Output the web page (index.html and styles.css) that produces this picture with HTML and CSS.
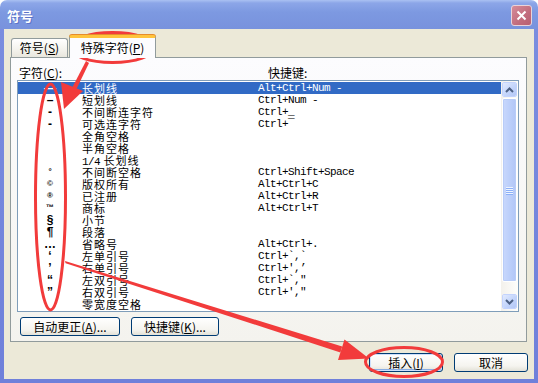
FILE: index.html
```html
<!DOCTYPE html>
<html lang="zh-CN">
<head>
    <meta charset="UTF-8">
    <title>符号</title>
    <link rel="stylesheet" href="styles.css">
</head>
<body>
    <div class="window">
        <!-- Title bar -->
        <div class="titlebar">
            <span class="title">符号</span>
            <span class="close-btn">
                <svg width="11" height="11" viewBox="0 0 11 11"><path d="M1.5 1.5 L9.5 9.5 M9.5 1.5 L1.5 9.5" stroke="#fff" stroke-width="2" fill="none"/></svg>
            </span>
        </div>

        <div class="client">
            <!-- Tabs -->
            <div class="tabs">
                <div class="tab">符号(<u>S</u>)</div>
                <div class="tab active">特殊字符(<u>P</u>)</div>
            </div>

            <div class="panel">
                <div class="labels">
                    <span class="label-char">字符(<u>C</u>):</span>
                    <span>快捷键:</span>
                </div>

                <div class="listbox">
                    <div class="rows">
                        <div class="row selected"><span class="sym">—</span><span class="name">长划线</span><span class="key">Alt+Ctrl+Num -</span></div>
                        <div class="row"><span class="sym">–</span><span class="name">短划线</span><span class="key">Ctrl+Num -</span></div>
                        <div class="row"><span class="sym">-</span><span class="name">不间断连字符</span><span class="key">Ctrl+_</span></div>
                        <div class="row"><span class="sym">-</span><span class="name">可选连字符</span><span class="key">Ctrl+¯</span></div>
                        <div class="row"><span class="sym"></span><span class="name">全角空格</span><span class="key"></span></div>
                        <div class="row"><span class="sym"></span><span class="name">半角空格</span><span class="key"></span></div>
                        <div class="row"><span class="sym"></span><span class="name"><span class="mono">1/4</span> 长划线</span><span class="key"></span></div>
                        <div class="row"><span class="sym small">°</span><span class="name">不间断空格</span><span class="key">Ctrl+Shift+Space</span></div>
                        <div class="row"><span class="sym small">©</span><span class="name">版权所有</span><span class="key">Alt+Ctrl+C</span></div>
                        <div class="row"><span class="sym small">®</span><span class="name">已注册</span><span class="key">Alt+Ctrl+R</span></div>
                        <div class="row"><span class="sym small">™</span><span class="name">商标</span><span class="key">Alt+Ctrl+T</span></div>
                        <div class="row"><span class="sym">§</span><span class="name">小节</span><span class="key"></span></div>
                        <div class="row"><span class="sym">¶</span><span class="name">段落</span><span class="key"></span></div>
                        <div class="row"><span class="sym">…</span><span class="name">省略号</span><span class="key">Alt+Ctrl+.</span></div>
                        <div class="row"><span class="sym">‘</span><span class="name">左单引号</span><span class="key">Ctrl+`,`</span></div>
                        <div class="row"><span class="sym">’</span><span class="name">右单引号</span><span class="key">Ctrl+',’</span></div>
                        <div class="row"><span class="sym">“</span><span class="name">左双引号</span><span class="key">Ctrl+`,"</span></div>
                        <div class="row"><span class="sym">”</span><span class="name">右双引号</span><span class="key">Ctrl+',"</span></div>
                        <div class="row"><span class="sym"></span><span class="name">零宽度空格</span><span class="key"></span></div>
                    </div>

                    <!-- Vertical scrollbar -->
                    <div class="scrollbar">
                        <div class="scroll-btn">
                            <svg width="9" height="6" viewBox="0 0 9 6"><path d="M1 5 L4.5 1.5 L8 5" stroke="#4D6185" stroke-width="2" fill="none"/></svg>
                        </div>
                        <div class="thumb">
                            <div class="grip"><i></i><i></i><i></i><i></i></div>
                        </div>
                        <div class="scroll-btn down">
                            <svg width="9" height="6" viewBox="0 0 9 6"><path d="M1 1 L4.5 4.5 L8 1" stroke="#4D6185" stroke-width="2" fill="none"/></svg>
                        </div>
                    </div>
                </div>

                <div class="panel-buttons">
                    <button class="btn btn-auto">自动更正(<u>A</u>)...</button>
                    <button class="btn btn-keys">快捷键(<u>K</u>)...</button>
                </div>
            </div>

            <div class="dialog-buttons">
                <button class="btn btn-dialog default">插入(<u>I</u>)</button>
                <button class="btn btn-dialog">取消</button>
            </div>
        </div>

        <!-- Red annotation marks drawn over the dialog -->
        <svg class="marks" width="538" height="383" viewBox="0 0 538 383">
            <g fill="none" stroke="#F23B3B" stroke-width="3">
                <ellipse cx="112.5" cy="47.5" rx="42" ry="15"/>
                <ellipse cx="50.5" cy="197" rx="15" ry="113"/>
                <ellipse cx="404" cy="362" rx="38.5" ry="14.5"/>
            </g>
            <g fill="#F23B3B">
                <path d="M86 61 L89 63 L76 90 L72 88 Z"/>
                <path d="M64 109 L61 82 L83 91 Z"/>
                <path d="M65 261 L65.6 263.2 L340.4 352.4 L342.2 346.6 Z"/>
                <path d="M369 358.5 L344.5 339.5 L338 360 Z"/>
            </g>
        </svg>
    </div>
</body>
</html>
```

FILE: styles.css
```css
/* Basic page setup */
body {
    margin: 0;
    font-family: "Noto Sans CJK SC", sans-serif;
    font-size: 12px;
    color: #000;
}

/* Window frame and title bar */
.window {
    position: relative;
    width: 538px;
    height: 383px;
    box-sizing: border-box;
    display: flex;
    flex-direction: column;
    padding: 0 4px 4px 4px;
    border-radius: 7px 7px 0 0;
    background: linear-gradient(to bottom, #AAC1F2 0, #8CA6E8 3px, #7D99E1 12px, #7892DD 29px, #7A8DDF 29px, #6F80DA 100%);
    overflow: hidden;
}

.titlebar {
    height: 29px;
    display: flex;
    align-items: center;
    justify-content: space-between;
    padding: 0 2px 0 3px;
}

.title {
    color: #fff;
    font-weight: bold;
    font-size: 13px;
    text-shadow: 1px 1px 0 #5C74C8;
    margin-top: 1px;
}

.close-btn {
    width: 19px;
    height: 19px;
    display: flex;
    align-items: center;
    justify-content: center;
    border: 1px solid #E9D3D9;
    border-radius: 3px;
    background: linear-gradient(135deg, #D58C99, #C26C7D 60%, #B85F72);
    margin-top: 1px;
}

.client {
    flex: 1;
    background-color: #ECE9D8;
    display: flex;
    flex-direction: column;
    padding: 6px 7px 0 6px;
}

/* Tabs */
.tabs {
    display: flex;
    align-items: flex-end;
    height: 22px;
    position: relative;
    z-index: 1;
}

.tab {
    box-sizing: border-box;
    width: 57px;
    height: 19px;
    margin-left: 1px;
    border: 1px solid #919B9C;
    border-bottom: none;
    border-radius: 3px 3px 0 0;
    background: linear-gradient(to bottom, #FFFFFF, #F3F2EC 60%, #E9E7DE);
    text-align: center;
    line-height: 18px;
}

.tab.active {
    width: 87px;
    height: 23px;
    margin-bottom: -1px;
    border-top: 3px solid #FFC43C;
    box-shadow: 0 -1px 0 #E68B2C;
    background: #FCFCFE;
    line-height: 19px;
}

.panel {
    box-sizing: border-box;
    height: 285px;
    border: 1px solid #919B9C;
    background: linear-gradient(to bottom, #FCFCFE, #F4F3EE);
    padding: 7px 7px 0 6px;
}

.labels {
    display: flex;
    height: 15px;
    line-height: 15px;
    padding-left: 2px;
}

.label-char {
    width: 249px;
}

/* Character list */
.listbox {
    box-sizing: border-box;
    width: 502px;
    height: 232px;
    border: 1px solid #7F9DB9;
    background-color: #fff;
    display: flex;
}

.rows {
    flex: 1;
    padding-top: 1px;
}

.row {
    display: grid;
    grid-template-columns: 64px 176px 1fr;
    height: 12px;
    line-height: 12px;
    white-space: nowrap;
}

.row.selected {
    background-color: #316AC5;
    color: #fff;
}

.name {
    font-size: 11px;
    letter-spacing: 1px;
}

.sym {
    text-align: center;
    font-family: "Liberation Sans", sans-serif;
    font-weight: bold;
}

.sym.small {
    font-size: 8px;
}

.key,
.mono {
    font-family: "Liberation Mono", monospace;
    font-size: 11px;
    letter-spacing: -0.6px;
}

/* Scrollbar */
.scrollbar {
    width: 17px;
    box-sizing: border-box;
    padding: 1px 1px 2px 1px;
    display: flex;
    flex-direction: column;
    background: linear-gradient(to right, #F3F1EC, #FEFEFB);
}

.scroll-btn {
    box-sizing: border-box;
    width: 15px;
    height: 15px;
    border: 1px solid #fff;
    border-radius: 2px;
    outline: 1px solid #C3D3FD;
    outline-offset: -1px;
    background: linear-gradient(135deg, #E1EAFE, #C1D3FB 60%, #B4C8F6);
    display: flex;
    align-items: center;
    justify-content: center;
}

.scroll-btn.down {
    margin-top: auto;
}

.thumb {
    box-sizing: border-box;
    height: 184px;
    margin-top: 1px;
    border: 1px solid #fff;
    border-radius: 2px;
    box-shadow: inset 0 0 0 1px #B8CCF8;
    background: linear-gradient(to right, #C9D8FC, #BCCFFA 50%, #B1C6F7);
    display: flex;
    align-items: center;
    justify-content: center;
}

.grip {
    display: flex;
    flex-direction: column;
    gap: 1px;
}

.grip i {
    display: block;
    width: 7px;
    height: 1px;
    background-color: #EEF4FE;
    box-shadow: 0 1px 0 #8CB0F8;
}

/* Buttons */
.btn {
    box-sizing: border-box;
    height: 19px;
    padding: 0;
    border: 1px solid #003C74;
    border-radius: 3px;
    background: linear-gradient(to bottom, #FFFFFF, #F5F4EF 70%, #E3E1D7);
    font-family: "Noto Sans CJK SC", sans-serif;
    font-size: 12px;
    line-height: 16px;
    color: #000;
}

.panel-buttons {
    display: flex;
    gap: 11px;
    margin-top: 5px;
    padding-left: 3px;
}

.btn-auto {
    width: 100px;
}

.btn-keys {
    width: 88px;
}

.dialog-buttons {
    display: flex;
    justify-content: flex-end;
    gap: 11px;
    margin-top: 11px;
    margin-right: -1px;
}

.btn-dialog {
    width: 74px;
}

.btn-dialog.default {
    box-shadow: inset 0 0 0 1px #CDE0FC, inset 0 -1px 0 1px #89ADE4;
}

/* Annotation overlay */
.marks {
    position: absolute;
    left: 0;
    top: 0;
    pointer-events: none;
}
```
